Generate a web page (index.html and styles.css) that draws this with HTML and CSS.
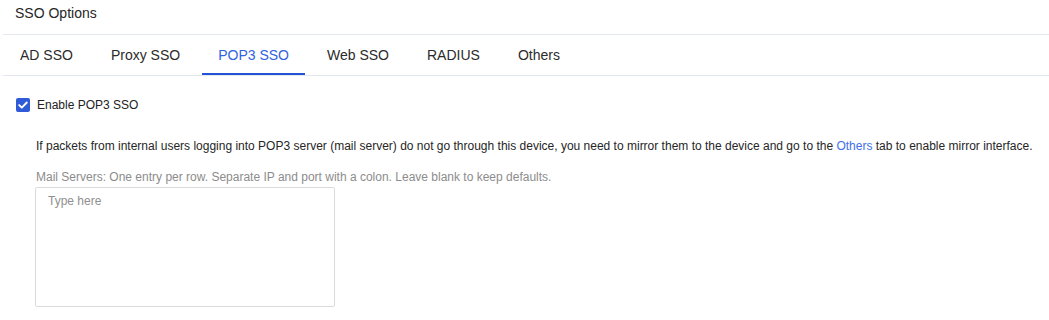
FILE: index.html
```html
<!DOCTYPE html>
<html lang="en">
<head>
  <meta charset="UTF-8">
  <title>SSO Options</title>
  <link rel="stylesheet" href="styles.css">
</head>
<body>

  <div class="header">SSO Options</div>

  <div class="tabs">
    <a class="tab">AD SSO</a>
    <a class="tab">Proxy SSO</a>
    <a class="tab active">POP3 SSO</a>
    <a class="tab">Web SSO</a>
    <a class="tab">RADIUS</a>
    <a class="tab">Others</a>
  </div>

  <div class="content">
    <label class="check-row">
      <span class="checkbox">
        <svg width="14" height="14" viewBox="0 0 14 14">
          <rect width="14" height="14" rx="2" fill="#2f5bd9"/>
          <path d="M3.2 7.1 L5.8 9.7 L10.8 4.5" fill="none" stroke="#fff" stroke-width="1.9" stroke-linecap="round" stroke-linejoin="round"/>
        </svg>
      </span>
      Enable POP3 SSO
    </label>

    <div class="section">
      <p class="desc">If packets from internal users logging into POP3 server (mail server) do not go through this device, you need to mirror them to the device and go to the <a class="link">Others</a> tab to enable mirror interface.</p>
      <p class="hint">Mail Servers: One entry per row. Separate IP and port with a colon. Leave blank to keep defaults.</p>
      <textarea class="servers" placeholder="Type here"></textarea>
    </div>
  </div>

</body>
</html>
```

FILE: styles.css
```css
body {
  margin: 0;
  font-family: "Liberation Sans", Arial, sans-serif;
  color: #262626;
  background: #fff;
}

.header {
  margin-left: 3px;
  height: 29px;
  padding: 5px 0 0 12px;
  font-size: 14px;
  line-height: 16px;
  border-bottom: 1px solid #e3e7ee;
}

.tabs {
  margin-left: 3px;
  padding-left: 1px;
  display: flex;
  border-bottom: 1px solid #e3e7ee;
}

.tab {
  position: relative;
  padding: 0 16px;
  margin-right: 6px;
  height: 40px;
  line-height: 40px;
  font-size: 14px;
  color: #2b2b2b;
  cursor: pointer;
}

.tab.active {
  color: #3162e0;
}

.tab.active::after {
  content: "";
  position: absolute;
  left: 0;
  right: 0;
  bottom: 0;
  height: 2px;
  background: #2452d6;
}

.check-row {
  display: flex;
  align-items: center;
  margin: 22px 0 0 16px;
  height: 14px;
  font-size: 12px;
  line-height: 14px;
  color: #222;
}

.checkbox {
  display: flex;
  width: 14px;
  height: 14px;
  margin-right: 7px;
}

.section {
  padding-left: 36px;
}

.desc {
  margin: 27px 0 0;
  font-size: 12px;
  line-height: 14px;
  color: #262626;
}

.link {
  color: #3f6fe8;
  cursor: pointer;
}

.hint {
  margin: 17px 0 0;
  font-size: 12px;
  line-height: 14px;
  color: #8c8c8c;
}

.servers {
  display: block;
  box-sizing: border-box;
  margin: 3px 0 0 -1px;
  width: 300px;
  height: 120px;
  padding: 6px 12px;
  border: 1px solid #dadada;
  border-radius: 2px;
  font-family: "Liberation Sans", Arial, sans-serif;
  font-size: 12px;
  line-height: 14px;
  resize: none;
  outline: none;
}

.servers::placeholder {
  color: #8f8f8f;
}
```
